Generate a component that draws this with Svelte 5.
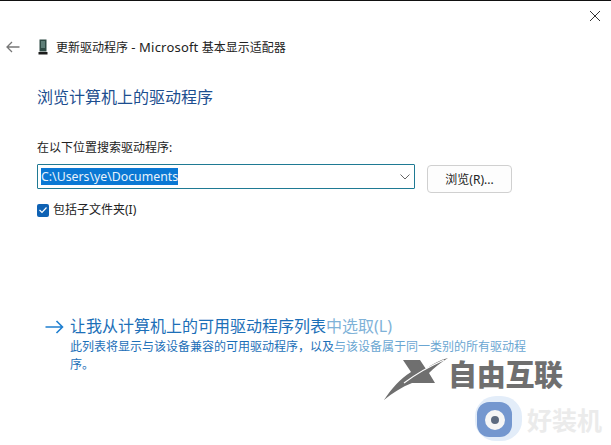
<script>
    const searchPath = "C:\\Users\\ye\\Documents";
</script>

<main class="dialog">
    <button class="close" aria-label="关闭">
        <svg width="12" height="12" viewBox="0 0 12 12"><path d="M1 1l10 10M11 1L1 11" stroke="#333" stroke-width="1" fill="none" /></svg>
    </button>

    <header class="titlebar">
        <svg class="back" width="14" height="12" viewBox="0 0 14 12"><path d="M13.5 6H1M6 1L1 6l5 5" stroke="#777" stroke-width="1.3" fill="none" /></svg>
        <svg class="device" width="10" height="16" viewBox="0 0 10 16">
            <rect x="1.5" y="0.5" width="7" height="12" fill="#2f4a44" />
            <rect x="3" y="2" width="4" height="7" fill="#5f7f78" />
            <rect x="0.5" y="13" width="9" height="2.5" fill="#1b1b1b" />
        </svg>
        <span class="title">更新驱动程序 <span class="latin">- Microsoft</span> 基本显示适配器</span>
    </header>

    <section class="content">
        <h1>浏览计算机上的驱动程序</h1>

        <label class="field-label" for="path">在以下位置搜索驱动程序:</label>
        <div class="path-row">
            <div class="combo" id="path">
                <span class="selected">{searchPath}</span>
                <svg width="10" height="6" viewBox="0 0 10 6"><path d="M0.5 0.5L5 5l4.5-4.5" stroke="#666" stroke-width="1" fill="none" /></svg>
            </div>
            <button class="browse">浏览(R)...</button>
        </div>

        <div class="check-row">
            <span class="checkbox">
                <svg width="10" height="8" viewBox="0 0 10 8"><path d="M1.5 4l2.5 2.5L8.5 1.5" stroke="#fff" stroke-width="1.2" fill="none" /></svg>
            </span>
            <span>包括子文件夹(I)</span>
        </div>

        <div class="link-row">
            <svg class="go" width="19" height="14" viewBox="0 0 19 14"><path d="M0.5 7H17.5M11.5 1l6 6-6 6" stroke="#1f7fd0" stroke-width="1.6" fill="none" /></svg>
            <div class="link-text">
                <div class="link-title">让我从计算机上的可用驱动程序列表<span class="faded">中选取(L)</span></div>
                <p>此列表将显示与该设备兼容的可用驱动程序，以及<span class="faded-sub">与该设备属于同一类别的所有驱动程</span>序。</p>
            </div>
        </div>
    </section>

    <div class="mark-xiaz">
        <svg width="64" height="44" viewBox="0 0 64 44">
            <path d="M19 3H36L42 12C48 7 56 3 64 1C56 6 50 11 45 16L51 26H28C18 30 8 36 0 43C7 32 16 22 27 15Z" fill="#6f6f6f" />
            <path d="M20 26C32 17 46 9 60 3" stroke="#fff" stroke-width="1.2" fill="none" />
        </svg>
        <span>自由互联</span>
    </div>

    <div class="mark-hzj">
        <span class="eye"><span class="lens"><span class="pupil"></span></span></span>
        <span class="hzj-text">好装机</span>
    </div>
</main>

<style>
    :global(body) {
        margin: 0;
        background: #fff;
    }

    .dialog {
        position: relative;
        width: 611px;
        height: 445px;
        box-sizing: border-box;
        border-top: 1px solid #111;
        overflow: hidden;
        background: #fff;
        color: #222;
        font-family: "Noto Sans", "Noto Sans CJK SC", sans-serif;
        font-size: 12px;
    }

    .close {
        position: absolute;
        top: 8px;
        right: 9px;
        width: 14px;
        height: 14px;
        padding: 0;
        display: flex;
        align-items: center;
        justify-content: center;
        border: none;
        background: none;
    }

    .titlebar {
        display: flex;
        align-items: center;
        height: 16px;
        padding: 38px 0 0 6px;
    }

    .back {
        margin-right: 18px;
    }

    .device {
        margin-right: 8px;
    }

    .title {
        line-height: 16px;
        white-space: nowrap;
    }

    .latin {
        font-size: 13px;
        letter-spacing: 0.2px;
    }

    .content {
        padding: 30px 0 0 37px;
    }

    h1 {
        margin: 0;
        font-size: 16px;
        font-weight: 400;
        line-height: 24px;
        color: #1c4e8f;
    }

    .field-label {
        display: block;
        margin-top: 30px;
        line-height: 18px;
    }

    .path-row {
        display: flex;
        align-items: flex-start;
        gap: 12px;
        margin-top: 7px;
    }

    .combo {
        box-sizing: border-box;
        width: 378px;
        height: 25px;
        display: flex;
        align-items: center;
        justify-content: space-between;
        padding: 0 4px 0 3px;
        border: 1px solid #1f7a94;
        border-radius: 1px;
    }

    .selected {
        background: #0a78d4;
        color: #e8f2fb;
        font-size: 12.3px;
        line-height: 17px;
    }

    .browse {
        box-sizing: border-box;
        width: 85px;
        height: 28px;
        margin-top: 1px;
        border: 1px solid #d0d0d0;
        border-radius: 4px;
        background: #fdfdfd;
        color: #222;
        font: inherit;
        padding: 0;
    }

    .check-row {
        display: flex;
        align-items: center;
        gap: 4px;
        margin-top: 8px;
        line-height: 18px;
    }

    .checkbox {
        box-sizing: border-box;
        width: 12px;
        height: 13px;
        display: flex;
        align-items: center;
        justify-content: center;
        border-radius: 2px;
        background: #0f62b4;
    }

    .link-row {
        display: flex;
        align-items: flex-start;
        gap: 6px;
        margin: 95px 0 0 8px;
    }

    .go {
        margin-top: 6px;
    }

    .link-title {
        font-size: 16px;
        line-height: 24px;
        color: #1c6fb8;
        white-space: nowrap;
    }

    .faded {
        color: #7fb2d8;
    }

    p {
        width: 458px;
        margin: 0;
        line-height: 18px;
        color: #1c6fb8;
    }

    .faded-sub {
        color: #6aa6d2;
    }

    .mark-xiaz {
        position: absolute;
        left: 384px;
        top: 356px;
        display: flex;
        align-items: flex-start;
        color: #6f6f6f;
        font-size: 29px;
        font-weight: 900;
        line-height: 36px;
        letter-spacing: -0.3px;
    }

    .mark-hzj {
        position: absolute;
        left: 475px;
        top: 395px;
        display: flex;
        align-items: center;
        gap: 5px;
    }

    .eye {
        width: 47px;
        height: 45px;
        box-sizing: border-box;
        padding: 6px 0 0 2px;
        border-radius: 45%;
        background: #e3edf9;
    }

    .lens {
        width: 35px;
        height: 35px;
        display: flex;
        align-items: center;
        justify-content: center;
        border-radius: 35%;
        background: #7497cf;
    }

    .pupil {
        width: 20px;
        height: 20px;
        box-sizing: border-box;
        border: 6px solid #f6f6f6;
        border-radius: 50%;
        background: #5d6b80;
    }

    .hzj-text {
        color: #ebebeb;
        font-size: 25px;
        font-weight: 700;
        line-height: 34px;
        margin-top: 3px;
    }
</style>
